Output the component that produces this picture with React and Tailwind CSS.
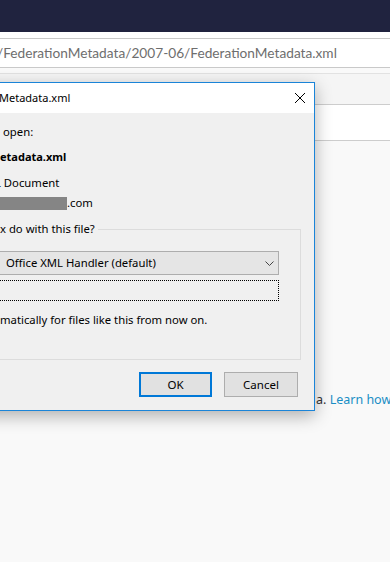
export default function App() {
  return (
    <div className="relative w-[390px] h-[562px] overflow-hidden bg-[#f9f9f9] font-['Noto_Sans','Open_Sans',sans-serif]">
      {/* browser chrome */}
      <div className="h-[32px] bg-[#20233f]" />
      <div className="h-[6px] bg-white" />
      <div className="h-[30px] bg-white border-y border-[#c9c9c9] flex items-center">
        <span className="ml-[-3px] whitespace-nowrap font-['Lato',sans-serif] text-[13.7px] text-[#6e6e6e]">
          /FederationMetadata/2007-06/FederationMetadata.xml
        </span>
      </div>
      <div className="h-[5px]" />
      <div className="h-[32px] bg-[#f5f5f5] border-t border-b border-t-[#e2e2e2] border-b-[#cdcdcd]" />
      <div className="h-[36px] bg-white border-b border-[#cdcdcd]" />

      {/* page */}
      <div className="h-[421px] border-b border-[#a0a0a0]">
        <p className="mt-[251px] pl-[316px] whitespace-nowrap text-[12.5px] leading-[16px] text-[#333]">
          a. <span className="text-[#1a8ec5]">Learn how</span>
        </p>
      </div>

      {/* open file dialog */}
      <div className="absolute left-[-200px] top-[82px] w-[515px] h-[329px] border border-[#1a84d8] bg-[#f0f0f0] shadow-[0_5px_16px_rgba(0,0,0,0.3)] text-[11.3px] leading-[16px] text-black">
        <div className="h-[30px] bg-white flex items-center justify-between pl-[198px] pr-[9px]">
          <span className="whitespace-nowrap text-[11px]">Metadata.xml</span>
          <svg width="10" height="10" viewBox="0 0 10 10">
            <path d="M0 0L10 10M10 0L0 10" stroke="#000" strokeWidth="1" />
          </svg>
        </div>

        <p className="mt-[11px] pl-[202px] whitespace-nowrap">open:</p>
        <p className="mt-[9px] pl-[199px] whitespace-nowrap font-bold text-[11px]">etadata.xml</p>
        <p className="mt-[10px] pl-[194px] whitespace-nowrap">L Document</p>
        <div className="mt-[4px] pl-[199px] flex items-center">
          <div className="w-[67px] h-[13px] bg-[#858585]" />
          <span>.com</span>
        </div>

        <div className="relative mt-[18px] ml-[12px] mr-[13px] h-[131px] border border-[#dcdcdc]">
          <span className="absolute top-[-9px] left-[186px] pr-[3px] bg-[#f0f0f0] whitespace-nowrap">
            x do with this file?
          </span>
          <div className="mt-[21px] ml-[16px] mr-[21px] h-[24px] border border-[#adadad] bg-[#e5e5e5] flex items-center justify-between pl-[175px] pr-[4px]">
            <span className="whitespace-nowrap">Office XML Handler (default)</span>
            <svg width="9" height="5" viewBox="0 0 9 5">
              <path d="M0.5 0.5L4.5 4.5L8.5 0.5" fill="none" stroke="#444" strokeWidth="1" />
            </svg>
          </div>
          <div className="mt-[5px] ml-[16px] mr-[21px] h-[21px] border border-dotted border-black" />
          <p className="mt-[11px] pl-[186px] whitespace-nowrap">
            matically for files like this from now on.
          </p>
        </div>

        <div className="mt-[12px] flex justify-end gap-[12px] pr-[16px]">
          <button className="w-[73px] h-[25px] border-2 border-[#0078d7] bg-[#e1e1e1] text-[11.5px]">OK</button>
          <button className="w-[74px] h-[25px] border border-[#adadad] bg-[#e1e1e1] text-[11.5px]">Cancel</button>
        </div>
      </div>
    </div>
  );
}
